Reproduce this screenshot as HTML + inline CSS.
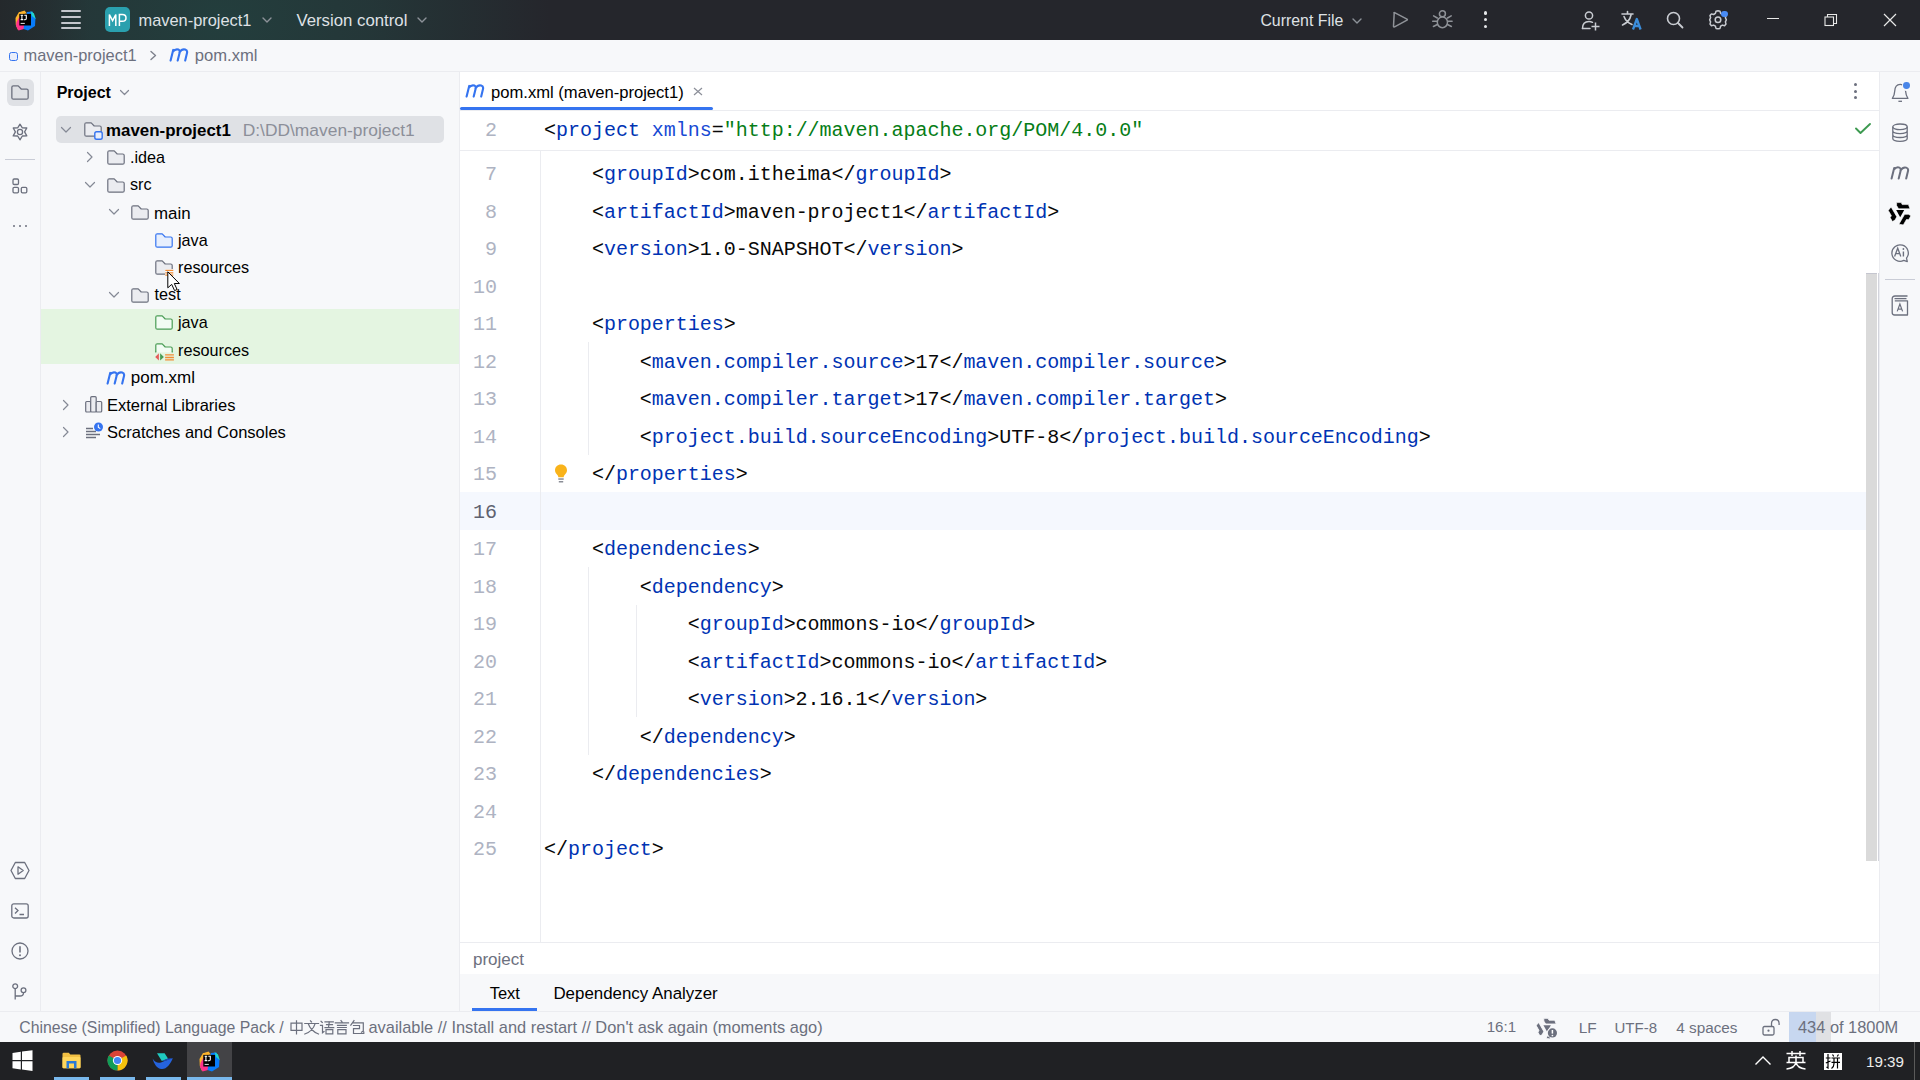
<!DOCTYPE html>
<html><head><meta charset="utf-8"><title>maven-project1 – pom.xml</title>
<style>
*{margin:0;padding:0;box-sizing:border-box}
html,body{width:1920px;height:1080px;overflow:hidden;background:#f7f8fa;position:relative;font-family:"Liberation Sans",sans-serif}
.a{position:absolute;display:block}
.tx{line-height:1;white-space:nowrap}
.cd{position:absolute;left:544px;font-family:"Liberation Mono",monospace;font-size:20px;white-space:pre;line-height:37.5px;height:37.5px;color:#080808;letter-spacing:-0.02px}
.ln{position:absolute;left:440px;width:57px;font-family:"Liberation Mono",monospace;font-size:20px;color:#aeb3c2;text-align:right;line-height:37.5px}
.ln.cur{color:#5e6270}
.t{color:#0033b3}
.at{color:#174ad4}
.v{color:#067d17}
</style></head><body>
<div class="a" style="left:0px;top:0px;width:1920px;height:40px;background:#25262c;"></div>
<div class="a" style="left:0px;top:0px;width:1000px;height:40px;background:linear-gradient(90deg, rgba(36,40,43,0.9) 0px, rgba(36,40,43,0) 90px), radial-gradient(ellipse 330px 260px at 220px 20px, rgba(35,62,61,1) 0%, rgba(36,60,60,0.75) 45%, rgba(39,40,46,0) 100%);"></div>
<div class="a" style="left:0px;top:40px;width:1920px;height:31px;background:#f7f8fa;"></div>
<div class="a" style="left:0px;top:71px;width:1920px;height:1px;background:#ebecf0;"></div>
<div class="a" style="left:40px;top:72px;width:1px;height:939px;background:#ebecf0;"></div>
<div class="a" style="left:460px;top:72px;width:1419px;height:870px;background:#ffffff;"></div>
<div class="a" style="left:459px;top:72px;width:1px;height:939px;background:#ebecf0;"></div>
<div class="a" style="left:1879px;top:72px;width:1px;height:939px;background:#ebecf0;"></div>
<div class="a" style="left:0px;top:1011px;width:1920px;height:1px;background:#ebecf0;"></div>
<div class="a" style="left:0px;top:1042px;width:1920px;height:38px;background:#202124;"></div>
<svg class="a" style="left:15px;top:10px;" width="21" height="21" viewBox="0 0 21 21" fill="none"><path d="M4 2.5 L9.5 0.5 L12 3.5 L4 4 Z" fill="#fcb32c"/>
<path d="M0.5 8 L4 2 L10 1.5 L9 9 L3 20 L0.8 15 Z" fill="#fcb32c"/>
<path d="M1.5 12 L6 4 L11 4 L9 19 L3.5 20.5 L1 16 Z" fill="#ff318c"/>
<path d="M12 2 L17.5 1.5 L20.5 8.5 L20 16 L13 20.5 L8.5 19 L10 10 Z" fill="#087cfa"/>
<path d="M15.5 1 L19 3.5 L20.7 9 L17 6 Z" fill="#21d7c8"/>
<rect x="4.3" y="3.9" width="11.7" height="11.6" fill="#000"/>
<path d="M5.6 5.2 H8.2 M6.9 5.2 V9.6 M5.6 9.6 H8.2 M9.3 5.2 H11.3 V8.6 Q11.3 9.8 10.1 9.8 H8.8" stroke="#fff" stroke-width="1.1" fill="none"/>
<rect x="5.6" y="12.9" width="4.2" height="0.9" fill="#fff"/></svg>
<div class="a" style="left:61px;top:10px;width:20px;height:2px;background:#c4c6cc;border-radius:1px"></div>
<div class="a" style="left:61px;top:16px;width:20px;height:2px;background:#c4c6cc;border-radius:1px"></div>
<div class="a" style="left:61px;top:22px;width:20px;height:2px;background:#c4c6cc;border-radius:1px"></div>
<div class="a" style="left:61px;top:27px;width:20px;height:2px;background:#c4c6cc;border-radius:1px"></div>
<div class="a" style="left:105px;top:7px;width:25px;height:25px;background:#2aa0ae;border-radius:5px"></div>
<svg class="a" style="left:105px;top:7px;" width="25" height="25" viewBox="0 0 25 25" fill="none"><path d="M4.4 18.9 V7.6 L7.6 13.6 L10.8 7.6 V18.9 M14.4 18.9 V7.6 H17.3 C19.7 7.6 21 8.7 21 10.9 C21 13.1 19.7 14.2 17.3 14.2 H14.4" stroke="#fff" stroke-width="1.5" stroke-linejoin="miter"/></svg>
<div class="a tx" style="left:138.5px;top:12px;font-size:16.4px;color:#dfe1e5;font-family:'Liberation Sans',sans-serif;">maven-project1</div>
<svg class="a" style="left:261.5px;top:16.5px;" width="10" height="7" viewBox="0 0 10 7" fill="none"><path d="M1 1L5 5L9 1" stroke="#8d9299" stroke-width="1.4" fill="none" stroke-linecap="round" stroke-linejoin="round"/></svg>
<div class="a tx" style="left:296.4px;top:13px;font-size:16.8px;color:#dfe1e5;font-family:'Liberation Sans',sans-serif;">Version control</div>
<svg class="a" style="left:416.5px;top:16.5px;" width="10" height="7" viewBox="0 0 10 7" fill="none"><path d="M1 1L5 5L9 1" stroke="#8d9299" stroke-width="1.4" fill="none" stroke-linecap="round" stroke-linejoin="round"/></svg>
<div class="a tx" style="left:1260.4px;top:13px;font-size:15.9px;color:#dfe1e5;font-family:'Liberation Sans',sans-serif;">Current File</div>
<svg class="a" style="left:1351.5px;top:18px;" width="10" height="7" viewBox="0 0 10 7" fill="none"><path d="M1 1L5 5L9 1" stroke="#8d9299" stroke-width="1.4" fill="none" stroke-linecap="round" stroke-linejoin="round"/></svg>
<svg class="a" style="left:1391px;top:10px;" width="19" height="19" viewBox="0 0 19 19" fill="none"><path d="M3.2 3.3 Q2.5 2.2 3.6 2.6 L16 9.2 Q16.8 9.7 16 10.2 L3.6 16.9 Q2.5 17.3 2.5 16.2 Z" stroke="#8f9298" stroke-width="1.5" stroke-linejoin="round"/></svg>
<svg class="a" style="left:1431px;top:10px;" width="22" height="19" viewBox="0 0 22 19" fill="none"><g stroke="#8f9298" stroke-width="1.5" stroke-linecap="round">
<circle cx="11.4" cy="3.8" r="3"/>
<ellipse cx="11.4" cy="12.3" rx="5.1" ry="5.4" fill="#25262c"/>
<path d="M6.3 8 L2.6 5.8 M16.5 8 L20.2 5.8 M6 11.2 H1.7 M16.8 11.2 H21.1 M6.3 14.5 L2.4 16.5 M16.5 14.5 L20.4 16.5"/>
</g></svg>
<div class="a" style="left:1483.5px;top:11.4px;width:3.2px;height:3.2px;background:#e6e7ea;border-radius:50%"></div>
<div class="a" style="left:1483.5px;top:18.2px;width:3.2px;height:3.2px;background:#e6e7ea;border-radius:50%"></div>
<div class="a" style="left:1483.5px;top:25.099999999999998px;width:3.2px;height:3.2px;background:#e6e7ea;border-radius:50%"></div>
<svg class="a" style="left:1580px;top:10px;" width="22" height="21" viewBox="0 0 22 21" fill="none"><circle cx="9" cy="5.5" r="3.6" stroke="#c9ccd2" stroke-width="1.5"/>
<path d="M2.5 18.5 C2.5 13.5 5 11.5 9 11.5 C10.5 11.5 11.5 11.8 12.5 12.3" stroke="#c9ccd2" stroke-width="1.5" stroke-linecap="round"/>
<path d="M2.5 18.5 H10" stroke="#c9ccd2" stroke-width="1.5" stroke-linecap="round"/>
<path d="M15.5 12.5v8M11.5 16.5h8" stroke="#c9ccd2" stroke-width="1.5"/></svg>
<svg class="a" style="left:1621px;top:10px;" width="23" height="20" viewBox="0 0 23 20" fill="none"><path d="M1 4h11M6.5 1.5v2.5M3 6.5c1.5 4 4 6.5 8 8M10 5c-1 5-4 8-8.5 10" stroke="#c9ccd2" stroke-width="1.6" stroke-linecap="round"/>
<path d="M12 19.5 L15.8 9 L19.6 19.5 M13.3 16 H18.3" stroke="#3b8ddb" stroke-width="2.3" stroke-linejoin="round"/></svg>
<svg class="a" style="left:1666px;top:11px;" width="18" height="18" viewBox="0 0 18 18" fill="none"><circle cx="7.5" cy="7.5" r="6" stroke="#c9ccd2" stroke-width="1.6"/><path d="M12 12 L16.5 16.5" stroke="#c9ccd2" stroke-width="1.8" stroke-linecap="round"/></svg>
<svg class="a" style="left:1708px;top:9px;" width="20" height="21" viewBox="0 0 20 21" fill="none"><path d="M10 1.8 L12 2.2 L12.6 4.4 L14.4 5.5 L16.6 4.9 L18 6.5 L17.4 8.7 L18.3 10.6 L18.3 11 L17.4 12.9 L18 15.1 L16.6 16.7 L14.4 16.1 L12.6 17.2 L12 19.4 L10 19.8 L8 19.4 L7.4 17.2 L5.6 16.1 L3.4 16.7 L2 15.1 L2.6 12.9 L1.7 11 L1.7 10.6 L2.6 8.7 L2 6.5 L3.4 4.9 L5.6 5.5 L7.4 4.4 L8 2.2 Z" stroke="#c9ccd2" stroke-width="1.5" stroke-linejoin="round"/><circle cx="10" cy="10.8" r="2.8" stroke="#c9ccd2" stroke-width="1.5"/></svg>
<div class="a" style="left:1721px;top:10.7px;width:6.5px;height:6.5px;background:#4a8cf5;border-radius:50%"></div>
<div class="a" style="left:1767px;top:17.5px;width:12px;height:1.2px;background:#e8e8e8;"></div>
<svg class="a" style="left:1824px;top:13px;" width="14" height="14" viewBox="0 0 14 14" fill="none"><rect x="1" y="4" width="8.5" height="8.5" stroke="#e8e8e8" stroke-width="1.1"/><path d="M3.5 4V1.5H12.5V10.5H9.5" stroke="#e8e8e8" stroke-width="1.1"/></svg>
<svg class="a" style="left:1883px;top:13px;" width="14" height="14" viewBox="0 0 14 14" fill="none"><path d="M1 1L13 13M13 1L1 13" stroke="#e8e8e8" stroke-width="1.2"/></svg>
<div class="a" style="left:8.5px;top:52px;width:9.5px;height:9px;background:#e9eefb;border:1.5px solid #3574f0;border-radius:2.5px"></div>
<div class="a tx" style="left:23.6px;top:47px;font-size:16.4px;color:#6c707e;font-family:'Liberation Sans',sans-serif;">maven-project1</div>
<svg class="a" style="left:149px;top:50px;" width="9" height="11" viewBox="0 0 9 11" fill="none"><path d="M2 1.5L6.5 5.5L2 9.5" stroke="#7d818c" stroke-width="1.4" fill="none" stroke-linecap="round" stroke-linejoin="round"/></svg>
<svg class="a" style="left:169px;top:48px;" width="20" height="14" viewBox="0 0 20 14" fill="none"><path d="M1.6 12.6 L4.2 1.9 M3.9 3.6 C5.6 1.5 7.8 1.1 9.4 1.6 C10.7 2.1 11 3.2 10.7 4.6 L8.7 12.6 M10.5 4.4 C12.2 1.8 14.4 1.1 16.2 1.6 C17.8 2.1 18.4 3.3 18 4.9 L16.2 12.6" stroke="#3574f0" stroke-width="2.1" stroke-linecap="round" stroke-linejoin="round"/></svg>
<div class="a tx" style="left:194.8px;top:48px;font-size:16.6px;color:#6c707e;font-family:'Liberation Sans',sans-serif;">pom.xml</div>
<div class="a" style="left:7px;top:79px;width:27px;height:27px;background:#dfe1e5;border-radius:6px"></div>
<svg class="a" style="left:11px;top:85px;" width="18" height="15" viewBox="0 0 18 15" fill="none"><path d="M0.8500000000000001 12.65 V2.35 Q0.8500000000000001 0.8500000000000001 2.35 0.8500000000000001 H7.2 L10.2 4.050000000000001 H15.650000000000002 Q17.150000000000002 4.050000000000001 17.150000000000002 5.550000000000001 V12.65 Q17.150000000000002 14.15 15.650000000000002 14.15 H2.35 Q0.8500000000000001 14.15 0.8500000000000001 12.65 Z" fill="#dfe1e5" stroke="#6c707e" stroke-width="1.3" stroke-linejoin="round"/></svg>
<svg class="a" style="left:11px;top:123px;" width="18" height="18" viewBox="0 0 18 18" fill="none"><path d="M9 1.2 L11.3 4.9 L15.8 5 L13.6 8.9 L15.8 12.9 L11.3 13 L9 16.8 L6.7 13 L2.2 12.9 L4.4 8.9 L2.2 5 L6.7 4.9 Z" stroke="#6c707e" stroke-width="1.3" stroke-linejoin="round"/><circle cx="9" cy="9" r="2.6" stroke="#6c707e" stroke-width="1.3"/></svg>
<div class="a" style="left:5px;top:159px;width:30px;height:1px;background:#c9ccd6;"></div>
<svg class="a" style="left:12px;top:178px;" width="16" height="16" viewBox="0 0 16 16" fill="none"><rect x="1" y="1" width="5.5" height="5.5" rx="1.2" stroke="#6c707e" stroke-width="1.3"/><rect x="1" y="9.3" width="5.5" height="5.5" rx="1.2" stroke="#6c707e" stroke-width="1.3"/><rect x="9.3" y="9.3" width="5.5" height="5.5" rx="1.2" stroke="#6c707e" stroke-width="1.3"/></svg>
<div class="a" style="left:12.8px;top:224.8px;width:2.4px;height:2.4px;background:#6c707e;border-radius:50%"></div>
<div class="a" style="left:18.8px;top:224.8px;width:2.4px;height:2.4px;background:#6c707e;border-radius:50%"></div>
<div class="a" style="left:25.1px;top:224.8px;width:2.4px;height:2.4px;background:#6c707e;border-radius:50%"></div>
<svg class="a" style="left:10px;top:861px;" width="20" height="19" viewBox="0 0 20 19" fill="none"><path d="M5.3 1.5 H14.7 L19 9.5 L14.7 17.5 H5.3 L1 9.5 Z" stroke="#6c707e" stroke-width="1.3" stroke-linejoin="round"/><path d="M8 5.8 L13.2 9.5 L8 13.2 Z" stroke="#6c707e" stroke-width="1.3" stroke-linejoin="round"/></svg>
<svg class="a" style="left:11px;top:903px;" width="18" height="16" viewBox="0 0 18 16" fill="none"><rect x="0.8" y="0.8" width="16.4" height="14.2" rx="2" stroke="#6c707e" stroke-width="1.3"/><path d="M4 4.8 L7 7.6 L4 10.4 M8.5 11.5 H13" stroke="#6c707e" stroke-width="1.3"/></svg>
<svg class="a" style="left:11px;top:942px;" width="18" height="18" viewBox="0 0 18 18" fill="none"><circle cx="9" cy="9" r="8" stroke="#6c707e" stroke-width="1.3"/><path d="M9 4.3V10.5" stroke="#6c707e" stroke-width="1.6"/><circle cx="9" cy="13.2" r="1" fill="#6c707e"/></svg>
<svg class="a" style="left:12px;top:983px;" width="15" height="17" viewBox="0 0 15 17" fill="none"><circle cx="3.2" cy="3.2" r="2.4" stroke="#6c707e" stroke-width="1.3"/><circle cx="11.5" cy="7.3" r="2.4" stroke="#6c707e" stroke-width="1.3"/><path d="M3.2 5.6 V16.5 M3.2 13 H8 Q11.5 13 11.5 9.7" stroke="#6c707e" stroke-width="1.3"/></svg>
<div class="a tx" style="left:56.7px;top:85px;font-size:16px;color:#000;font-family:'Liberation Sans',sans-serif;font-weight:bold;">Project</div>
<svg class="a" style="left:119px;top:89px;" width="11" height="8" viewBox="0 0 11 8" fill="none"><path d="M1.5 1.5L5.5 5.5L9.5 1.5" stroke="#858995" stroke-width="1.2" fill="none" stroke-linecap="round" stroke-linejoin="round"/></svg>
<div class="a" style="left:56px;top:116px;width:388px;height:27px;background:#dfe1e5;border-radius:5px"></div>
<div class="a" style="left:41px;top:308.5px;width:418px;height:55px;background:#e4f5e1;"></div>
<svg class="a" style="left:60px;top:125.5px;" width="12" height="8" viewBox="0 0 12 8" fill="none"><path d="M1.5 1.5L6 6L10.5 1.5" stroke="#858995" stroke-width="1.2" fill="none" stroke-linecap="round" stroke-linejoin="round"/></svg>
<svg class="a" style="left:84px;top:121.7px;" width="20" height="18" viewBox="0 0 20 18" fill="none"><path d="M0.8 12.700000000000001 V2.3 Q0.8 0.8 2.3 0.8 H7.2 L10.2 4.0 H15.7 Q17.2 4.0 17.2 5.5 V12.700000000000001 Q17.2 14.200000000000001 15.7 14.200000000000001 H2.3 Q0.8 14.200000000000001 0.8 12.700000000000001 Z" fill="#ebecf0" stroke="#6c707e" stroke-width="1.2" stroke-linejoin="round"/><rect x="10.8" y="9.8" width="7.4" height="7.4" rx="1.8" fill="#e9eefb" stroke="#3574f0" stroke-width="1.4"/></svg>
<div class="a tx" style="left:106px;top:123px;font-size:16.9px;color:#000;font-family:'Liberation Sans',sans-serif;font-weight:bold;">maven-project1</div>
<div class="a tx" style="left:242.7px;top:122px;font-size:17.4px;color:#8c8f99;font-family:'Liberation Sans',sans-serif;">D:\DD\maven-project1</div>
<svg class="a" style="left:85.5px;top:151.0px;" width="8" height="12" viewBox="0 0 8 12" fill="none"><path d="M1.5 1.5L6 6L1.5 10.5" stroke="#858995" stroke-width="1.2" fill="none" stroke-linecap="round" stroke-linejoin="round"/></svg>
<svg class="a" style="left:107px;top:150.2px;" width="18" height="15" viewBox="0 0 18 15" fill="none"><path d="M0.8 12.700000000000001 V2.3 Q0.8 0.8 2.3 0.8 H7.2 L10.2 4.0 H15.7 Q17.2 4.0 17.2 5.5 V12.700000000000001 Q17.2 14.200000000000001 15.7 14.200000000000001 H2.3 Q0.8 14.200000000000001 0.8 12.700000000000001 Z" fill="#ebecf0" stroke="#6c707e" stroke-width="1.2" stroke-linejoin="round"/></svg>
<div class="a tx" style="left:130px;top:149px;font-size:16.2px;color:#000;font-family:'Liberation Sans',sans-serif;">.idea</div>
<svg class="a" style="left:84px;top:180.5px;" width="12" height="8" viewBox="0 0 12 8" fill="none"><path d="M1.5 1.5L6 6L10.5 1.5" stroke="#858995" stroke-width="1.2" fill="none" stroke-linecap="round" stroke-linejoin="round"/></svg>
<svg class="a" style="left:107px;top:177.7px;" width="18" height="15" viewBox="0 0 18 15" fill="none"><path d="M0.8 12.700000000000001 V2.3 Q0.8 0.8 2.3 0.8 H7.2 L10.2 4.0 H15.7 Q17.2 4.0 17.2 5.5 V12.700000000000001 Q17.2 14.200000000000001 15.7 14.200000000000001 H2.3 Q0.8 14.200000000000001 0.8 12.700000000000001 Z" fill="#ebecf0" stroke="#6c707e" stroke-width="1.2" stroke-linejoin="round"/></svg>
<div class="a tx" style="left:130px;top:176px;font-size:16.2px;color:#000;font-family:'Liberation Sans',sans-serif;">src</div>
<svg class="a" style="left:108px;top:208.0px;" width="12" height="8" viewBox="0 0 12 8" fill="none"><path d="M1.5 1.5L6 6L10.5 1.5" stroke="#858995" stroke-width="1.2" fill="none" stroke-linecap="round" stroke-linejoin="round"/></svg>
<svg class="a" style="left:131px;top:205.2px;" width="18" height="15" viewBox="0 0 18 15" fill="none"><path d="M0.8 12.700000000000001 V2.3 Q0.8 0.8 2.3 0.8 H7.2 L10.2 4.0 H15.7 Q17.2 4.0 17.2 5.5 V12.700000000000001 Q17.2 14.200000000000001 15.7 14.200000000000001 H2.3 Q0.8 14.200000000000001 0.8 12.700000000000001 Z" fill="#ebecf0" stroke="#6c707e" stroke-width="1.2" stroke-linejoin="round"/></svg>
<div class="a tx" style="left:154px;top:206px;font-size:16.9px;color:#000;font-family:'Liberation Sans',sans-serif;">main</div>
<svg class="a" style="left:155px;top:232.7px;" width="18" height="15" viewBox="0 0 18 15" fill="none"><path d="M0.8 12.700000000000001 V2.3 Q0.8 0.8 2.3 0.8 H7.2 L10.2 4.0 H15.7 Q17.2 4.0 17.2 5.5 V12.700000000000001 Q17.2 14.200000000000001 15.7 14.200000000000001 H2.3 Q0.8 14.200000000000001 0.8 12.700000000000001 Z" fill="#e7effd" stroke="#3574f0" stroke-width="1.2" stroke-linejoin="round"/></svg>
<div class="a tx" style="left:178px;top:232px;font-size:16.2px;color:#000;font-family:'Liberation Sans',sans-serif;">java</div>
<svg class="a" style="left:155px;top:260.2px;" width="19" height="16" viewBox="0 0 19 16" fill="none"><path d="M0.8 12.700000000000001 V2.3 Q0.8 0.8 2.3 0.8 H7.2 L10.2 4.0 H15.7 Q17.2 4.0 17.2 5.5 V12.700000000000001 Q17.2 14.200000000000001 15.7 14.200000000000001 H2.3 Q0.8 14.200000000000001 0.8 12.700000000000001 Z" fill="#ebecf0" stroke="#6c707e" stroke-width="1.2" stroke-linejoin="round"/><rect x="10" y="9" width="8" height="7" fill="#f7f8fa"/><path d="M10.3 10.4h8M10.3 12.8h8M10.3 15.1h8" stroke="#f28c35" stroke-width="1.3"/></svg>
<div class="a tx" style="left:178px;top:259px;font-size:16.2px;color:#000;font-family:'Liberation Sans',sans-serif;">resources</div>
<svg class="a" style="left:108px;top:290.5px;" width="12" height="8" viewBox="0 0 12 8" fill="none"><path d="M1.5 1.5L6 6L10.5 1.5" stroke="#858995" stroke-width="1.2" fill="none" stroke-linecap="round" stroke-linejoin="round"/></svg>
<svg class="a" style="left:131px;top:287.7px;" width="18" height="15" viewBox="0 0 18 15" fill="none"><path d="M0.8 12.700000000000001 V2.3 Q0.8 0.8 2.3 0.8 H7.2 L10.2 4.0 H15.7 Q17.2 4.0 17.2 5.5 V12.700000000000001 Q17.2 14.200000000000001 15.7 14.200000000000001 H2.3 Q0.8 14.200000000000001 0.8 12.700000000000001 Z" fill="#ebecf0" stroke="#6c707e" stroke-width="1.2" stroke-linejoin="round"/></svg>
<div class="a tx" style="left:154.6px;top:286px;font-size:16.2px;color:#000;font-family:'Liberation Sans',sans-serif;">test</div>
<svg class="a" style="left:155px;top:315.2px;" width="18" height="15" viewBox="0 0 18 15" fill="none"><path d="M0.8 12.700000000000001 V2.3 Q0.8 0.8 2.3 0.8 H7.2 L10.2 4.0 H15.7 Q17.2 4.0 17.2 5.5 V12.700000000000001 Q17.2 14.200000000000001 15.7 14.200000000000001 H2.3 Q0.8 14.200000000000001 0.8 12.700000000000001 Z" fill="#f2fcf3" stroke="#499c54" stroke-width="1.2" stroke-linejoin="round"/></svg>
<div class="a tx" style="left:178px;top:314px;font-size:16.2px;color:#000;font-family:'Liberation Sans',sans-serif;">java</div>
<svg class="a" style="left:155px;top:342.5px;" width="19" height="19" viewBox="0 0 19 19" fill="none"><path d="M0.8 12.700000000000001 V2.3 Q0.8 0.8 2.3 0.8 H7.2 L10.2 4.0 H15.7 Q17.2 4.0 17.2 5.5 V12.700000000000001 Q17.2 14.200000000000001 15.7 14.200000000000001 H2.3 Q0.8 14.200000000000001 0.8 12.700000000000001 Z" fill="#f2fcf3" stroke="#499c54" stroke-width="1.2" stroke-linejoin="round"/><rect x="0" y="9.3" width="19" height="9.7" fill="#e4f5e1"/><path d="M0.2 13.9 L3.9 10.3 V17.5 Z" fill="#e55b5b"/><path d="M5.1 10.3 L8.9 13.9 L5.1 17.5 Z" fill="#499c54"/><path d="M10.1 11.9h8.8M10.1 14.5h8.8M10.1 16.9h8.8" stroke="#f28c35" stroke-width="1.3"/><path d="M0.6 9.3 V8.5 M17.4 9.3 V8.5" stroke="#499c54" stroke-width="1.2"/></svg>
<div class="a tx" style="left:178px;top:342px;font-size:16.2px;color:#000;font-family:'Liberation Sans',sans-serif;">resources</div>
<svg class="a" style="left:106px;top:371px;" width="20" height="14" viewBox="0 0 20 14" fill="none"><path d="M1.6 12.6 L4.2 1.9 M3.9 3.6 C5.6 1.5 7.8 1.1 9.4 1.6 C10.7 2.1 11 3.2 10.7 4.6 L8.7 12.6 M10.5 4.4 C12.2 1.8 14.4 1.1 16.2 1.6 C17.8 2.1 18.4 3.3 18 4.9 L16.2 12.6" stroke="#3574f0" stroke-width="2.1" stroke-linecap="round" stroke-linejoin="round"/></svg>
<div class="a tx" style="left:130.8px;top:369px;font-size:17px;color:#000;font-family:'Liberation Sans',sans-serif;">pom.xml</div>
<svg class="a" style="left:61.5px;top:398.5px;" width="8" height="12" viewBox="0 0 8 12" fill="none"><path d="M1.5 1.5L6 6L1.5 10.5" stroke="#858995" stroke-width="1.2" fill="none" stroke-linecap="round" stroke-linejoin="round"/></svg>
<svg class="a" style="left:85px;top:396.0px;" width="18" height="17" viewBox="0 0 18 17" fill="none"><rect x="0.7" y="5.5" width="5" height="10.5" rx="1" fill="#ebecf0" stroke="#6c707e" stroke-width="1.2"/><rect x="5.7" y="0.7" width="5.5" height="15.3" rx="1" fill="#ebecf0" stroke="#6c707e" stroke-width="1.2"/><rect x="11.2" y="5.5" width="5.5" height="10.5" rx="1" fill="#ebecf0" stroke="#6c707e" stroke-width="1.2"/></svg>
<div class="a tx" style="left:107px;top:397px;font-size:16.5px;color:#000;font-family:'Liberation Sans',sans-serif;">External Libraries</div>
<svg class="a" style="left:61.5px;top:426.0px;" width="8" height="12" viewBox="0 0 8 12" fill="none"><path d="M1.5 1.5L6 6L1.5 10.5" stroke="#858995" stroke-width="1.2" fill="none" stroke-linecap="round" stroke-linejoin="round"/></svg>
<svg class="a" style="left:85px;top:422.0px;" width="19" height="18" viewBox="0 0 19 18" fill="none"><path d="M1 6.5h7M1 9.5h10M1 12.5h14M1 15.5h10" stroke="#6c707e" stroke-width="1.3"/><circle cx="13.5" cy="5" r="4.5" fill="#3574f0"/><path d="M13.3 2.4V5.2L15.3 6.6" stroke="#fff" stroke-width="1.1" fill="none"/></svg>
<div class="a tx" style="left:107px;top:424px;font-size:16.5px;color:#000;font-family:'Liberation Sans',sans-serif;">Scratches and Consoles</div>
<svg class="a" style="left:166.5px;top:270.5px;" width="14" height="21" viewBox="0 0 14 21" fill="none"><path d="M0.8 0.8 V16.8 L4.7 13.4 L7.6 19.6 L10.1 18.5 L7.3 12.5 L12.4 12.5 Z" fill="#fff" stroke="#000" stroke-width="1" stroke-linejoin="round"/></svg>
<div class="a" style="left:460px;top:110px;width:1419px;height:1px;background:#ebecf0;"></div>
<div class="a" style="left:460px;top:150px;width:1419px;height:1px;background:#ebecf0;"></div>
<svg class="a" style="left:465px;top:84px;" width="20" height="14" viewBox="0 0 20 14" fill="none"><path d="M1.6 12.6 L4.2 1.9 M3.9 3.6 C5.6 1.5 7.8 1.1 9.4 1.6 C10.7 2.1 11 3.2 10.7 4.6 L8.7 12.6 M10.5 4.4 C12.2 1.8 14.4 1.1 16.2 1.6 C17.8 2.1 18.4 3.3 18 4.9 L16.2 12.6" stroke="#3574f0" stroke-width="2.1" stroke-linecap="round" stroke-linejoin="round"/></svg>
<div class="a tx" style="left:491px;top:85px;font-size:16.6px;color:#000;font-family:'Liberation Sans',sans-serif;">pom.xml (maven-project1)</div>
<svg class="a" style="left:693px;top:87px;" width="10" height="9" viewBox="0 0 10 9" fill="none"><path d="M1 1L9 8M9 1L1 8" stroke="#8c8f99" stroke-width="1.2"/></svg>
<div class="a" style="left:460px;top:107px;width:253px;height:3px;background:#3574f0;border-radius:2px"></div>
<div class="a" style="left:1853.7px;top:83.1px;width:3px;height:3px;background:#6c707e;border-radius:50%"></div>
<div class="a" style="left:1853.7px;top:89.6px;width:3px;height:3px;background:#6c707e;border-radius:50%"></div>
<div class="a" style="left:1853.7px;top:96.1px;width:3px;height:3px;background:#6c707e;border-radius:50%"></div>
<svg class="a" style="left:1854px;top:122px;" width="18" height="13" viewBox="0 0 18 13" fill="none"><path d="M2 6.5L6.5 11L16 2" stroke="#3d9a50" stroke-width="1.9" stroke-linecap="round" stroke-linejoin="round"/></svg>
<div class="a" style="left:460px;top:492.1px;width:1406px;height:37.5px;background:#f5f8fe;"></div>
<div class="a" style="left:540px;top:151px;width:1px;height:791px;background:#ebecf0;"></div>
<div class="a" style="left:588px;top:342.1px;width:1px;height:112.5px;background:#ebecf0;"></div>
<div class="a" style="left:588px;top:567.1px;width:1px;height:187.5px;background:#ebecf0;"></div>
<div class="a" style="left:636px;top:604.6px;width:1px;height:112.5px;background:#ebecf0;"></div>
<svg class="a" style="left:553px;top:463px;" width="16" height="22" viewBox="0 0 16 22" fill="none"><path d="M8 1.5C4.4 1.5 2 4.1 2 7.3c0 2.3 1.3 3.6 2.4 4.8.6.7.9 1.3.9 2.1h5.4c0-.8.3-1.4.9-2.1 1.1-1.2 2.4-2.5 2.4-4.8C14 4.1 11.6 1.5 8 1.5z" fill="#f9b31a"/><rect x="5.3" y="15.3" width="5.4" height="1.5" fill="#8a8d96"/><rect x="5.8" y="18" width="4.4" height="1.5" fill="#8a8d96"/></svg>
<div class="ln" style="top:112px">2</div>
<div class="cd" style="top:112px">&lt;<span class="t">project</span> <span class="at">xmlns</span>=<span class="v">"http://maven.apache.org/POM/4.0.0"</span></div>
<div class="ln" style="top:156.2px">7</div>
<div class="cd" style="top:156.2px">    &lt;<span class="t">groupId</span>&gt;com.itheima&lt;/<span class="t">groupId</span>&gt;</div>
<div class="ln" style="top:193.7px">8</div>
<div class="cd" style="top:193.7px">    &lt;<span class="t">artifactId</span>&gt;maven-project1&lt;/<span class="t">artifactId</span>&gt;</div>
<div class="ln" style="top:231.2px">9</div>
<div class="cd" style="top:231.2px">    &lt;<span class="t">version</span>&gt;1.0-SNAPSHOT&lt;/<span class="t">version</span>&gt;</div>
<div class="ln" style="top:268.7px">10</div>
<div class="ln" style="top:306.2px">11</div>
<div class="cd" style="top:306.2px">    &lt;<span class="t">properties</span>&gt;</div>
<div class="ln" style="top:343.7px">12</div>
<div class="cd" style="top:343.7px">        &lt;<span class="t">maven.compiler.source</span>&gt;17&lt;/<span class="t">maven.compiler.source</span>&gt;</div>
<div class="ln" style="top:381.2px">13</div>
<div class="cd" style="top:381.2px">        &lt;<span class="t">maven.compiler.target</span>&gt;17&lt;/<span class="t">maven.compiler.target</span>&gt;</div>
<div class="ln" style="top:418.7px">14</div>
<div class="cd" style="top:418.7px">        &lt;<span class="t">project.build.sourceEncoding</span>&gt;UTF-8&lt;/<span class="t">project.build.sourceEncoding</span>&gt;</div>
<div class="ln" style="top:456.2px">15</div>
<div class="cd" style="top:456.2px">    &lt;/<span class="t">properties</span>&gt;</div>
<div class="ln cur" style="top:493.7px">16</div>
<div class="ln" style="top:531.2px">17</div>
<div class="cd" style="top:531.2px">    &lt;<span class="t">dependencies</span>&gt;</div>
<div class="ln" style="top:568.7px">18</div>
<div class="cd" style="top:568.7px">        &lt;<span class="t">dependency</span>&gt;</div>
<div class="ln" style="top:606.2px">19</div>
<div class="cd" style="top:606.2px">            &lt;<span class="t">groupId</span>&gt;commons-io&lt;/<span class="t">groupId</span>&gt;</div>
<div class="ln" style="top:643.7px">20</div>
<div class="cd" style="top:643.7px">            &lt;<span class="t">artifactId</span>&gt;commons-io&lt;/<span class="t">artifactId</span>&gt;</div>
<div class="ln" style="top:681.2px">21</div>
<div class="cd" style="top:681.2px">            &lt;<span class="t">version</span>&gt;2.16.1&lt;/<span class="t">version</span>&gt;</div>
<div class="ln" style="top:718.7px">22</div>
<div class="cd" style="top:718.7px">        &lt;/<span class="t">dependency</span>&gt;</div>
<div class="ln" style="top:756.2px">23</div>
<div class="cd" style="top:756.2px">    &lt;/<span class="t">dependencies</span>&gt;</div>
<div class="ln" style="top:793.7px">24</div>
<div class="ln" style="top:831.2px">25</div>
<div class="cd" style="top:831.2px">&lt;/<span class="t">project</span>&gt;</div>
<div class="a" style="left:1866px;top:273px;width:11px;height:588px;background:#dadada;border-top:1px solid #c5c6cf"></div>
<div class="a" style="left:1878px;top:273px;width:1px;height:588px;background:#d3d4dc;"></div>
<div class="a" style="left:460px;top:942px;width:1419px;height:1px;background:#ebecf0;"></div>
<div class="a" style="left:460px;top:943px;width:1419px;height:31px;background:#ffffff;"></div>
<div class="a" style="left:460px;top:974px;width:1419px;height:37px;background:#f7f8fa;"></div>
<div class="a tx" style="left:473px;top:951px;font-size:17px;color:#6c707e;font-family:'Liberation Sans',sans-serif;">project</div>
<div class="a tx" style="left:489.7px;top:985px;font-size:16.5px;color:#000;font-family:'Liberation Sans',sans-serif;">Text</div>
<div class="a tx" style="left:553.4px;top:986px;font-size:16.9px;color:#000;font-family:'Liberation Sans',sans-serif;">Dependency Analyzer</div>
<div class="a" style="left:472px;top:1008px;width:65px;height:3px;background:#3574f0;"></div>
<svg class="a" style="left:1890px;top:82px;" width="21" height="21" viewBox="0 0 21 21" fill="none"><path d="M2.4 16.4 C3.9 14.2 4.6 12.2 4.7 9.3 C4.9 4.6 7.1 2.3 10.2 2.3 C13.3 2.3 15.4 4.6 15.6 9.3 C15.8 12.2 16.4 14.2 17.9 16.4 Z" stroke="#6c707e" stroke-width="1.3" stroke-linejoin="round"/><path d="M8.4 19.3 H12" stroke="#6c707e" stroke-width="1.3"/></svg>
<div class="a" style="left:1901.6px;top:80.8px;width:9.8px;height:9.8px;background:#f7f8fa;border-radius:50%"></div>
<div class="a" style="left:1903.1px;top:82.3px;width:6.8px;height:6.8px;background:#4a86e8;border-radius:50%"></div>
<svg class="a" style="left:1891px;top:123px;" width="18" height="20" viewBox="0 0 18 20" fill="none"><ellipse cx="9" cy="3.8" rx="7.2" ry="2.8" stroke="#6c707e" stroke-width="1.3"/><path d="M1.8 3.8 V15.5 C1.8 17.1 5 18.3 9 18.3 C13 18.3 16.2 17.1 16.2 15.5 V3.8 M1.8 7.8 C1.8 9.4 5 10.6 9 10.6 C13 10.6 16.2 9.4 16.2 7.8 M1.8 11.7 C1.8 13.3 5 14.5 9 14.5 C13 14.5 16.2 13.3 16.2 11.7" stroke="#6c707e" stroke-width="1.3"/></svg>
<svg class="a" style="left:1890px;top:166px;" width="20" height="14" viewBox="0 0 20 14" fill="none"><path d="M1.6 12.6 L4.2 1.9 M3.9 3.6 C5.6 1.5 7.8 1.1 9.4 1.6 C10.7 2.1 11 3.2 10.7 4.6 L8.7 12.6 M10.5 4.4 C12.2 1.8 14.4 1.1 16.2 1.6 C17.8 2.1 18.4 3.3 18 4.9 L16.2 12.6" stroke="#6c707e" stroke-width="2" stroke-linecap="round" stroke-linejoin="round"/></svg>
<svg class="a" style="left:1885px;top:198px;" width="30" height="30" viewBox="0 0 30 30" fill="none"><path d="M11.6 4.6 L16.2 4.6 L17.2 6.6 L23.4 6.6 L25 10.8 L13.6 10.8 L11.6 7.6 Z" fill="#000" stroke="#fff" stroke-width="0.6"/><g transform="rotate(120 15 15.3)"><path d="M11.6 4.6 L16.2 4.6 L17.2 6.6 L23.4 6.6 L25 10.8 L13.6 10.8 L11.6 7.6 Z" fill="#000" stroke="#fff" stroke-width="0.6"/></g><g transform="rotate(240 15 15.3)"><path d="M11.6 4.6 L16.2 4.6 L17.2 6.6 L23.4 6.6 L25 10.8 L13.6 10.8 L11.6 7.6 Z" fill="#000" stroke="#fff" stroke-width="0.6"/></g><path d="M11.2 12 L19.2 12 L15.2 19.2 Z" fill="#000"/></svg>
<svg class="a" style="left:1890px;top:243px;" width="20" height="20" viewBox="0 0 20 20" fill="none"><path d="M16.5 15.2 A8.2 8.2 0 1 0 13.8 17.4 L17.3 18.6 Z" stroke="#6c707e" stroke-width="1.3" stroke-linejoin="round"/><path d="M4.6 13.5 L7.7 5.2 L10.8 13.5 M5.8 10.7 H9.6" stroke="#6c707e" stroke-width="1.3"/><path d="M13.4 8.5 V13.5" stroke="#6c707e" stroke-width="1.4"/><circle cx="13.4" cy="6" r="0.9" fill="#6c707e"/></svg>
<div class="a" style="left:1885px;top:279px;width:30px;height:1px;background:#c9ccd6;"></div>
<svg class="a" style="left:1891px;top:295px;" width="18" height="21" viewBox="0 0 18 21" fill="none"><path d="M16.5 1 H4 C2.3 1 1.2 2.2 1.2 3.8 V17.5 C1.2 19 2.2 20 3.6 20 H16.5 V5.8 H3.8" stroke="#6c707e" stroke-width="1.3" stroke-linejoin="round"/><path d="M3.5 3.6 H15.5" stroke="#6c707e" stroke-width="1.3"/><path d="M6.2 16.4 L8.9 9 L11.6 16.4 M7.1 14.2 H10.7" stroke="#6c707e" stroke-width="1.2"/></svg>
<div class="a tx" style="left:19.25px;top:1020px;font-size:15.8px;color:#6c707e;font-family:'Liberation Sans',sans-serif;">Chinese (Simplified) Language Pack /</div>
<svg class="a" style="left:288px;top:1019px;" width="80" height="17" viewBox="0 0 80 17" fill="none"><g stroke="#6c707e" stroke-width="1.2" fill="none" stroke-linecap="square">
<path d="M3 4.2 H14 V11.3 H3 Z M8.5 1.8 V15"/>
<path d="M22.5 1.8 L23.5 3 M16.8 4.5 H30.5 M27 4.8 C25.5 10 21.5 13.3 16.8 15 M20.3 4.8 C22 10 26 13.3 30.5 15"/>
<path d="M33 2.3 L34.3 3.5 M32.5 6.3 H34.5 V13.8 L36 12.5 M37 2.8 H45.3 M38.5 5.6 H44.5 M41.3 2.8 L40.5 8.6 M37 8.6 H45.7 M38 10.6 H44.8 V14.8 H38 Z"/>
<path d="M53 1.6 L54 2.8 M47.3 3.8 H60.5 M49.5 6.3 H58.3 M49.5 8.5 H58.3 M49.8 10.6 H58 V14.8 H49.8 Z"/>
<path d="M66 1.6 L62.8 6.2 M65 3.8 H75.3 V12 L73.5 13.2 M65.5 6.5 H71.5 V9.6 H65.5 V14.5 H75.8 V13"/>
</g></svg>
<div class="a tx" style="left:368.5px;top:1019px;font-size:16.4px;color:#6c707e;font-family:'Liberation Sans',sans-serif;">available // Install and restart // Don&#x27;t ask again (moments ago)</div>
<div class="a tx" style="left:1486.7px;top:1019px;font-size:15.1px;color:#6c707e;font-family:'Liberation Sans',sans-serif;">16:1</div>
<svg class="a" style="left:1533px;top:1013.5px;" width="27" height="27" viewBox="0 0 27 27" fill="none"><g transform="scale(0.93)"><path d="M11.6 4.6 L16.2 4.6 L17.2 6.6 L23.4 6.6 L25 10.8 L13.6 10.8 L11.6 7.6 Z" fill="#6c707e" stroke="#f7f8fa" stroke-width="1"/><g transform="rotate(120 15 15.3)"><path d="M11.6 4.6 L16.2 4.6 L17.2 6.6 L23.4 6.6 L25 10.8 L13.6 10.8 L11.6 7.6 Z" fill="#6c707e" stroke="#f7f8fa" stroke-width="1"/></g><g transform="rotate(240 15 15.3)"><path d="M11.6 4.6 L16.2 4.6 L17.2 6.6 L23.4 6.6 L25 10.8 L13.6 10.8 L11.6 7.6 Z" fill="#6c707e" stroke="#f7f8fa" stroke-width="1"/></g><path d="M11.2 12 L19.2 12 L15.2 19.2 Z" fill="#6c707e"/></g><circle cx="19.4" cy="18.9" r="5.6" fill="#f7f8fa"/><circle cx="19.4" cy="18.9" r="4.6" fill="#6c707e"/><path d="M19.4 16 V19.6" stroke="#fff" stroke-width="1.5"/><circle cx="19.4" cy="21.5" r="0.85" fill="#fff"/></svg>
<div class="a tx" style="left:1578.8px;top:1020px;font-size:15.4px;color:#6c707e;font-family:'Liberation Sans',sans-serif;">LF</div>
<div class="a tx" style="left:1614.5px;top:1020px;font-size:15px;color:#6c707e;font-family:'Liberation Sans',sans-serif;">UTF-8</div>
<div class="a tx" style="left:1676.3px;top:1020px;font-size:15.3px;color:#6c707e;font-family:'Liberation Sans',sans-serif;">4 spaces</div>
<svg class="a" style="left:1762px;top:1018px;" width="19" height="18" viewBox="0 0 19 18" fill="none"><rect x="1" y="8.5" width="11" height="8.5" rx="1.5" stroke="#6c707e" stroke-width="1.3"/><path d="M9.5 8.5 V5.5 C9.5 3 11 1.5 13.3 1.5 C15.6 1.5 17.1 3 17.1 5.5 V7" stroke="#6c707e" stroke-width="1.3"/><circle cx="6.5" cy="12.7" r="1.1" fill="#6c707e"/></svg>
<div class="a" style="left:1789px;top:1012px;width:27px;height:30px;background:#c7d7f0;"></div>
<div class="a" style="left:1816px;top:1012px;width:15px;height:30px;background:#e0e1e4;"></div>
<div class="a tx" style="left:1798px;top:1019px;font-size:16.4px;color:#6c707e;font-family:'Liberation Sans',sans-serif;">434 of 1800M</div>
<svg class="a" style="left:12px;top:1050px;" width="21" height="22" viewBox="0 0 21 22" fill="none"><path d="M0.5 3 L8.8 1.8 V10 H0.5 Z M10 1.6 L20.5 0.2 V10 H10 Z M0.5 11.2 H8.8 V19.4 L0.5 18.2 Z M10 11.2 H20.5 V21 L10 19.6 Z" fill="#ffffff"/></svg>
<svg class="a" style="left:62px;top:1052px;" width="19" height="17" viewBox="0 0 19 17" fill="none"><path d="M0.5 2 Q0.5 0.8 1.7 0.8 H6.8 L8.3 2.4 H17.3 Q18.5 2.4 18.5 3.6 V15 Q18.5 16.2 17.3 16.2 H1.7 Q0.5 16.2 0.5 15 Z" fill="#f2c043"/><rect x="0.5" y="5" width="18" height="11.2" rx="1" fill="#ffd65c"/><path d="M4.5 9 H14.5 V16.2 H12 V11.5 H7 V16.2 H4.5 Z" fill="#2a7ad6"/></svg>
<div class="a" style="left:54px;top:1077px;width:35px;height:3px;background:#79b8ec;"></div>
<svg class="a" style="left:107px;top:1050px;" width="21" height="21" viewBox="0 0 21 21" fill="none"><circle cx="10.5" cy="10.5" r="10" fill="#db4437"/>
<path d="M10.5 10.5 L19.2 5.5 A10 10 0 0 1 10.5 20.5 Z" fill="#f4c20d"/>
<path d="M10.5 10.5 L10.5 20.5 A10 10 0 0 1 1.8 5.5 Z" fill="#0f9d58"/>
<circle cx="10.5" cy="10.5" r="4.6" fill="#fff"/><circle cx="10.5" cy="10.5" r="3.6" fill="#4285f4"/></svg>
<div class="a" style="left:100px;top:1077px;width:35px;height:3px;background:#79b8ec;"></div>
<svg class="a" style="left:150px;top:1050px;" width="25" height="22" viewBox="0 0 25 22" fill="none"><path d="M2.6 8.5 C5 12.5 8 13.5 11 12.5 C15 11 18.5 9 22.8 8.2 C20.5 14 16.5 19.5 11.5 19 C7 18.5 4 14 2.6 8.5 Z" fill="#2563de"/><path d="M7 3.2 H14.6 L18 8.5 C16 9.3 13.8 10.4 11.8 10.9 Z" fill="#1fc9c0"/><path d="M11.8 10.9 C13.8 10.4 16 9.3 18 8.5 L22.8 8.2 C19 9.5 15.5 11.5 11.8 10.9 Z" fill="#1a4fc4"/></svg>
<div class="a" style="left:146px;top:1077px;width:35px;height:3px;background:#79b8ec;"></div>
<div class="a" style="left:187px;top:1042px;width:45px;height:38px;background:#434346;"></div>
<svg class="a" style="left:199px;top:1051px;" width="21" height="21" viewBox="0 0 21 21" fill="none"><path d="M4 2.5 L9.5 0.5 L12 3.5 L4 4 Z" fill="#fcb32c"/>
<path d="M0.5 8 L4 2 L10 1.5 L9 9 L3 20 L0.8 15 Z" fill="#fcb32c"/>
<path d="M1.5 12 L6 4 L11 4 L9 19 L3.5 20.5 L1 16 Z" fill="#ff318c"/>
<path d="M12 2 L17.5 1.5 L20.5 8.5 L20 16 L13 20.5 L8.5 19 L10 10 Z" fill="#087cfa"/>
<path d="M15.5 1 L19 3.5 L20.7 9 L17 6 Z" fill="#21d7c8"/>
<rect x="4.3" y="3.9" width="11.7" height="11.6" fill="#000"/>
<path d="M5.6 5.2 H8.2 M6.9 5.2 V9.6 M5.6 9.6 H8.2 M9.3 5.2 H11.3 V8.6 Q11.3 9.8 10.1 9.8 H8.8" stroke="#fff" stroke-width="1.1" fill="none"/>
<rect x="5.6" y="12.9" width="4.2" height="0.9" fill="#fff"/></svg>
<div class="a" style="left:187px;top:1077px;width:45px;height:3px;background:#79b8ec;"></div>
<svg class="a" style="left:1754px;top:1055px;" width="18" height="11" viewBox="0 0 18 11" fill="none"><path d="M1.5 9.5 L9 2 L16.5 9.5" stroke="#fff" stroke-width="1.4" fill="none"/></svg>
<svg class="a" style="left:1785px;top:1050px;" width="22" height="20" viewBox="0 0 22 20" fill="none"><g stroke="#fff" stroke-width="1.5" fill="none">
<path d="M1.5 3.5 H20.5 M7 1 V6 M15 1 V6 M4 7.5 H18 V12.5 H4 Z M11 5.5 V12.5 M1.5 12.5 H20.5 M11 12.5 C10 16.5 6 18.5 1.5 19 M11 12.5 C12 16.5 16 18.5 20.5 19"/>
</g></svg>
<div class="a" style="left:1824px;top:1052.6px;width:18px;height:17.6px;background:#ffffff;"></div>
<svg class="a" style="left:1825px;top:1053px;" width="16" height="16" viewBox="0 0 16 16" fill="none"><g stroke="#000" stroke-width="1.2" fill="none">
<path d="M3 1 V15 L1.5 14 M0.8 5 H5.5 M0.8 10 L5.5 8 M7.5 1.5 L8.8 3.5 M13.5 1.5 L12.2 3.5 M6.5 5 H15 M6.5 9.3 H15 M9 5 V10.5 C9 13 8 14.5 6.5 15.5 M12.5 5 V15.5"/>
</g></svg>
<div class="a tx" style="left:1866px;top:1054px;font-size:15.2px;color:#ececec;font-family:'Liberation Sans',sans-serif;">19:39</div>
<div class="a" style="left:1914px;top:1042px;width:1px;height:38px;background:#5a5a5a;"></div>
</body></html>
